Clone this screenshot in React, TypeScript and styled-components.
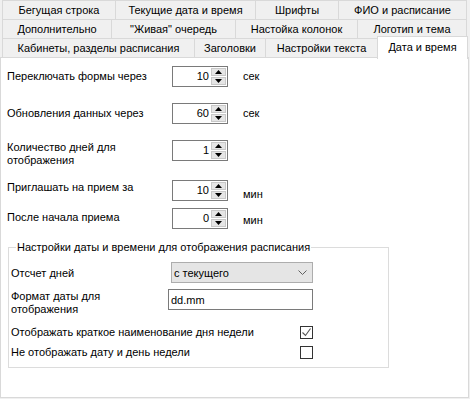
import React from "react"
import styled, { createGlobalStyle } from "styled-components"

const GlobalStyle = createGlobalStyle`
  html, body {
    margin: 0;
    padding: 0;
    background: #f0f0f0;
  }
  body {
    font-family: Tahoma, "Liberation Sans", "DejaVu Sans", sans-serif;
    font-size: 11px;
    color: #000;
  }
`

const Window = styled.div`
  width: 470px;
  height: 399px;
  background: #f0f0f0;
  box-sizing: border-box;
  display: flex;
  flex-direction: column;
  overflow: hidden;
`

const TabRow = styled.div`
  display: flex;
  height: 20px;
  padding-left: 2px;
  margin-bottom: -1px;
  align-items: flex-start;
`

const Tab = styled.div<{ $w: number; $active?: boolean }>`
  box-sizing: border-box;
  width: ${(p) => p.$w}px;
  height: ${(p) => (p.$active ? 23 : 20)}px;
  margin-top: ${(p) => (p.$active ? -2 : 0)}px;
  margin-right: -1px;
  border: 1px solid #d9d9d9;
  border-bottom: ${(p) => (p.$active ? "none" : "1px solid #d9d9d9")};
  background: ${(p) => (p.$active ? "#fff" : "#f0f0f0")};
  display: flex;
  align-items: center;
  justify-content: center;
  padding-bottom: ${(p) => (p.$active ? 3 : 0)}px;
  white-space: nowrap;
  position: relative;
  z-index: ${(p) => (p.$active ? 2 : 0)};
`

const Panel = styled.div`
  position: relative;
  z-index: 1;
  box-sizing: border-box;
  width: 469px;
  height: 341px;
  background: #fff;
  border: 1px solid #d9d9d9;
  padding: 8px 0 0 6px;
`

const FieldRow = styled.div<{ $top: number }>`
  display: grid;
  grid-template-columns: 165px 56px auto;
  align-items: start;
  margin-top: ${(p) => p.$top}px;
  height: 21px;
`

const Label = styled.div<{ $dy?: number }>`
  line-height: 13px;
  white-space: nowrap;
  padding-top: ${(p) => p.$dy ?? 4}px;
`

const Unit = styled.div<{ $dy?: number }>`
  padding-left: 15px;
  line-height: 13px;
  padding-top: ${(p) => p.$dy ?? 4}px;
`

const SpinBox = styled.div`
  box-sizing: border-box;
  width: 56px;
  height: 21px;
  border: 1px solid #7a7a7a;
  background: #fff;
  display: flex;
  align-items: center;
  padding: 1px;
`

const SpinValue = styled.div`
  flex: 1;
  text-align: right;
  padding-right: 2px;
  line-height: 17px;
`

const SpinButtons = styled.div`
  width: 15px;
  height: 17px;
  display: flex;
  flex-direction: column;
  gap: 1px;
`

const SpinButton = styled.div`
  flex: 1;
  box-sizing: border-box;
  background: #e5e5e5;
  border: 1px solid #c8c8c8;
  display: flex;
  align-items: center;
  justify-content: center;
`

const Group = styled.fieldset`
  box-sizing: border-box;
  width: 381px;
  margin: 12px 0 0 1px;
  padding: 8px 0 0 2px;
  height: 127px;
  border: 1px solid #dcdcdc;
`

const Legend = styled.legend`
  padding: 0 1px;
  margin-left: 5px;
  line-height: 13px;
`

const GroupRow = styled.div<{ $top: number }>`
  display: grid;
  grid-template-columns: 157px 145px;
  align-items: start;
  margin-top: ${(p) => p.$top}px;
`

const CheckRow = styled.div<{ $top: number }>`
  display: flex;
  justify-content: space-between;
  align-items: center;
  width: 302px;
  margin-top: ${(p) => p.$top}px;
`

const Combo = styled.div`
  box-sizing: border-box;
  margin-left: 3px;
  height: 21px;
  background: #e5e5e5;
  border: 1px solid #adadad;
  display: flex;
  align-items: center;
  justify-content: space-between;
  padding: 0 5px 0 2px;
`

const TextInput = styled.div`
  box-sizing: border-box;
  height: 21px;
  background: #fff;
  border: 1px solid #7a7a7a;
  padding: 0 2px;
  display: flex;
  align-items: center;
`

const CheckBox = styled.div`
  box-sizing: border-box;
  flex: none;
  width: 13px;
  height: 13px;
  border: 1px solid #333;
  background: #fff;
  display: flex;
  align-items: center;
  justify-content: center;
`

const Arrow = ({ up }: { up?: boolean }) => (
  <svg width="7" height="4" viewBox="0 0 7 4">
    <path d={up ? "M0 4 L3.5 0 L7 4 Z" : "M0 0 L3.5 4 L7 0 Z"} fill="#000" />
  </svg>
)

const Spinner = ({ value }: { value: string }) => (
  <SpinBox>
    <SpinValue>{value}</SpinValue>
    <SpinButtons>
      <SpinButton>
        <Arrow up />
      </SpinButton>
      <SpinButton>
        <Arrow />
      </SpinButton>
    </SpinButtons>
  </SpinBox>
)

const tabRows: { label: string; w: number; active?: boolean }[][] = [
  [
    { label: "Бегущая строка", w: 114 },
    { label: "Текущие дата и  время", w: 141 },
    { label: "Шрифты", w: 84 },
    { label: "ФИО и расписание", w: 129 },
  ],
  [
    { label: "Дополнительно", w: 110 },
    { label: "\"Живая\" очередь", w: 125 },
    { label: "Настойка колонок", w: 123 },
    { label: "Логотип и тема", w: 110 },
  ],
  [
    { label: "Кабинеты, разделы расписания", w: 193 },
    { label: "Заголовки", w: 72 },
    { label: "Настройки текста", w: 113 },
    { label: "Дата и время", w: 91, active: true },
  ],
]

export default function App() {
  return (
    <>
      <GlobalStyle />
      <Window>
        {tabRows.map((row, i) => (
          <TabRow key={i}>
            {row.map((t) => (
              <Tab key={t.label} $w={t.w} $active={t.active}>
                {t.label}
              </Tab>
            ))}
          </TabRow>
        ))}
        <Panel>
          <FieldRow $top={0}>
            <Label>Переключать формы через</Label>
            <Spinner value="10" />
            <Unit>сек</Unit>
          </FieldRow>
          <FieldRow $top={16}>
            <Label>Обновления данных через</Label>
            <Spinner value="60" />
            <Unit>сек</Unit>
          </FieldRow>
          <FieldRow $top={16}>
            <Label $dy={1}>
              Количество дней для
              <br />
              отображения
            </Label>
            <Spinner value="1" />
          </FieldRow>
          <FieldRow $top={19}>
            <Label $dy={1}>Приглашать на прием за</Label>
            <Spinner value="10" />
            <Unit $dy={8}>мин</Unit>
          </FieldRow>
          <FieldRow $top={7}>
            <Label $dy={3}>После начала приема</Label>
            <Spinner value="0" />
            <Unit $dy={6}>мин</Unit>
          </FieldRow>
          <Group>
            <Legend>Настройки даты и времени для отображения расписания</Legend>
            <GroupRow $top={0}>
              <Label $dy={5}>Отсчет дней</Label>
              <Combo>
                <span>с текущего</span>
                <svg width="9" height="5" viewBox="0 0 9 5">
                  <path d="M0.5 0.5 L4.5 4.5 L8.5 0.5" fill="none" stroke="#606060" strokeWidth="1" />
                </svg>
              </Combo>
            </GroupRow>
            <GroupRow $top={6}>
              <Label $dy={1}>
                Формат даты для
                <br />
                отображения
              </Label>
              <TextInput>dd.mm</TextInput>
            </GroupRow>
            <CheckRow $top={10}>
              <Label $dy={0}>Отображать краткое наименование дня недели</Label>
              <CheckBox>
                <svg width="11" height="11" viewBox="0 0 11 11">
                  <path d="M1.5 5.5 L4.5 8.5 L9.5 1.5" fill="none" stroke="#555" strokeWidth="1.1" />
                </svg>
              </CheckBox>
            </CheckRow>
            <CheckRow $top={7}>
              <Label $dy={0}>Не отображать дату и день недели</Label>
              <CheckBox />
            </CheckRow>
          </Group>
        </Panel>
      </Window>
    </>
  )
}
